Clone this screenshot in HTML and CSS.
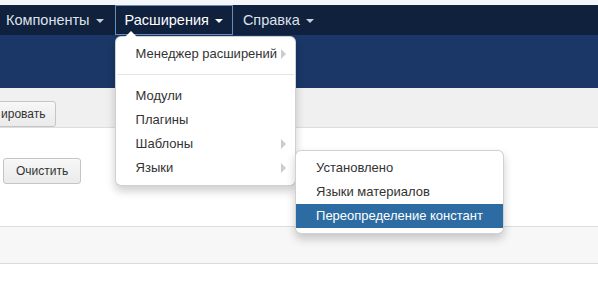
FILE: index.html
```html
<!DOCTYPE html>
<html lang="ru">
<head>
<meta charset="utf-8">
<link rel="stylesheet" href="styles.css">
</head>
<body>
<div class="topstrip"></div>
<nav class="navbar">
  <ul class="nav">
    <li class="nav-item first"><a>Компоненты<span class="caret"></span></a></li>
    <li class="nav-item open"><a>Расширения<span class="caret"></span></a>
      <ul class="dropdown">
        <li class="has-sub"><a>Менеджер расширений</a></li>
        <li class="divider"></li>
        <li><a>Модули</a></li>
        <li><a>Плагины</a></li>
        <li class="has-sub"><a>Шаблоны</a></li>
        <li class="has-sub sub-open"><a>Языки</a>
          <ul class="dropdown submenu">
            <li><a>Установлено</a></li>
            <li><a>Языки материалов</a></li>
            <li class="active"><a>Переопределение констант</a></li>
          </ul>
        </li>
      </ul>
    </li>
    <li class="nav-item"><a>Справка<span class="caret"></span></a></li>
  </ul>
</nav>
<header class="header"></header>
<div class="toolbar"><button class="btn btn-cut">ировать</button></div>
<main class="content">
  <div class="filters"><button class="btn">Очистить</button></div>
  <div class="band"></div>
</main>
</body>
</html>
```
FILE: styles.css
```css
html, body { margin: 0; padding: 0; background: #fff; }
body { font-family: "Liberation Sans", Arial, sans-serif; font-size: 13px; color: #333; overflow: hidden; }
ul { list-style: none; margin: 0; padding: 0; }

.topstrip { height: 5px; background: #f4f7fa; }

.navbar { height: 30px; background: #10213e; }
.nav { display: flex; height: 30px; }
.nav-item { position: relative; }
.nav-item > a { display: flex; align-items: center; height: 30px; box-sizing: border-box; padding: 0 11px 0 10px; color: #dde2ea; font-size: 14.5px; white-space: nowrap; }
.nav-item.first > a { padding-left: 6px; padding-right: 11px; }
.nav-item .caret { display: inline-block; width: 0; height: 0; margin-left: 6px; margin-top: 2px; border-left: 4px solid transparent; border-right: 4px solid transparent; border-top: 4px solid #c8cfd9; }
.nav-item.open > a { color: #fff; border: 1px solid #6a8db6; height: 30px; padding: 0 9px 0 9px; }
.nav-item.open > a .caret { border-top-color: #fff; }

.dropdown { position: absolute; top: 100%; left: 0; margin-top: 1px; background: #fff; border: 1px solid rgba(0,0,0,.18); border-radius: 6px; box-shadow: 0 5px 10px rgba(0,0,0,.2); padding: 5px 0; z-index: 10; white-space: nowrap; }
.nav-item.open > .dropdown::before { content: ""; position: absolute; top: -6px; left: 9px; border-left: 6px solid transparent; border-right: 6px solid transparent; border-bottom: 6px solid #fff; }
.dropdown li { position: relative; }
.dropdown li > a { display: block; padding: 3px 20px; line-height: 18px; color: #333; font-size: 13px; }
.dropdown li.has-sub > a { padding-right: 18px; }
.dropdown li.has-sub > a::after { content: ""; position: absolute; right: 9px; top: 50%; margin-top: -5px; border-top: 5px solid transparent; border-bottom: 5px solid transparent; border-left: 5px solid #ccc; }
.dropdown .divider { height: 1px; margin: 8px 1px; background: #e5e5e5; border-bottom: 1px solid #fff; }
.submenu { top: 0; left: 100%; margin-top: -6px; margin-left: 0; padding: 5px 0; }
.submenu li.active > a { background: #2d6ca2; color: #fff; }

.header { height: 53px; background: #1a3767; }

.toolbar { height: 40px; background: #f0f0f0; border-bottom: 1px solid #dedede; box-sizing: border-box; padding-top: 13px; }
.btn { font-family: "Liberation Sans", Arial, sans-serif; font-size: 12px; color: #333; background: linear-gradient(#f7f7f7, #ebebeb); border: 1px solid #c5c5c5; border-radius: 3px; height: 26px; padding: 0 12px; box-shadow: inset 0 1px 0 rgba(255,255,255,.3); }
.btn-cut { margin-left: -8px; padding: 0 10px 0 8px; }

.filters { height: 98px; box-sizing: border-box; padding: 30px 0 0 3px; }
.band { height: 36px; background: #f7f7f7; border-top: 1px solid #dcdcdc; border-bottom: 1px solid #dcdcdc; }
```
